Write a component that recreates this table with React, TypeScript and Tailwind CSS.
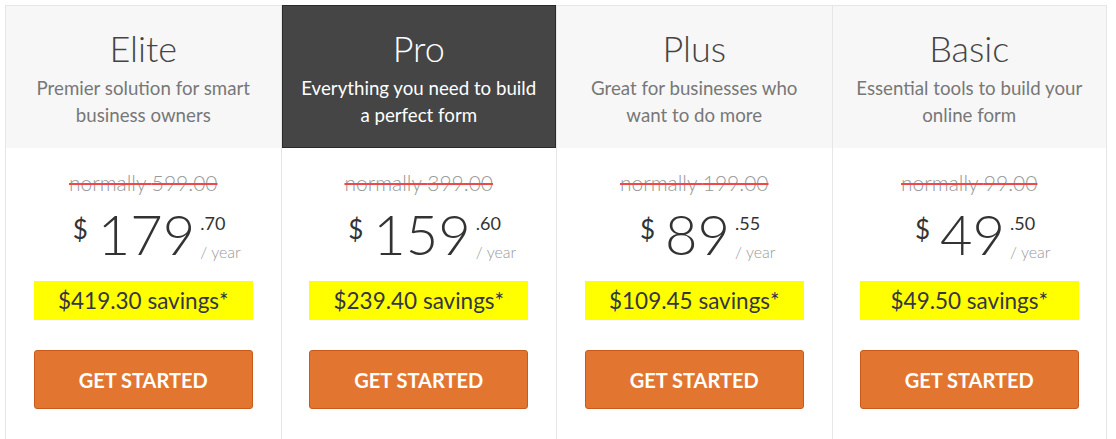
const plans = [
  { name: "Elite", desc: ["Premier solution for smart", "business owners"], was: "599.00", dollars: "179", cents: ".70", savings: "$419.30" },
  { name: "Pro", desc: ["Everything you need to build", "a perfect form"], was: "399.00", dollars: "159", cents: ".60", savings: "$239.40", featured: true },
  { name: "Plus", desc: ["Great for businesses who", "want to do more"], was: "199.00", dollars: "89", cents: ".55", savings: "$109.45" },
  { name: "Basic", desc: ["Essential tools to build your", "online form"], was: "99.00", dollars: "49", cents: ".50", savings: "$49.50" },
];

type Plan = (typeof plans)[number];

const PlanCard = ({ plan, last }: { plan: Plan; last: boolean }) => (
  <div className={`flex flex-col border-l border-t border-[#e6e6e6] bg-white ${last ? "border-r" : ""}`}>
    {plan.featured ? (
      <div className="-mt-px h-[143px] border border-[#2a2a2a] bg-[#454545] pt-[21px] text-center text-white">
        <h2 className="text-[36px] leading-[43px] font-light">{plan.name}</h2>
        <p className="mt-[5px] text-[18.7px] leading-[27px]">
          {plan.desc[0]}
          <br />
          {plan.desc[1]}
        </p>
      </div>
    ) : (
      <div className="h-[142px] bg-[#f7f7f7] pt-[21px] text-center">
        <h2 className="text-[36px] leading-[43px] font-light text-[#444]">{plan.name}</h2>
        <p className="mt-[5px] text-[18.7px] leading-[27px] text-[#777]">
          {plan.desc[0]}
          <br />
          {plan.desc[1]}
        </p>
      </div>
    )}

    <div className="flex flex-col items-center pt-[21px] pb-10">
      <p className="text-[21px] leading-[27px] font-light text-[#999] line-through decoration-[#f0484a] decoration-[1.5px]">
        normally {plan.was}
      </p>

      {/* price */}
      <div className="mt-[10px] flex items-start pl-[27px] text-[#333]">
        <span className="mt-[10px] text-[26px] leading-[26px]">$</span>
        <span className="ml-[10px] text-[56px] leading-[56px] font-light">{plan.dollars}</span>
        <div className="ml-[5px] flex flex-col">
          <span className="mt-[8px] text-[18px] leading-[18px]">{plan.cents}</span>
          <span className="mt-[12px] text-[16px] leading-[16px] font-light text-[#999]">/ year</span>
        </div>
      </div>

      <div className="mt-[19px] flex h-[39px] w-[219px] items-center justify-center bg-[#ffff00] text-[22.5px] text-[#353548]">
        {plan.savings} savings*
      </div>

      <button className="mt-[30px] h-[59px] w-[219px] rounded-[3px] border border-[#c85a1c] bg-[#e27631] text-[20px] font-bold text-white">
        GET STARTED
      </button>
    </div>
  </div>
);

export default function App() {
  return (
    <div className="min-h-[439px] bg-white pl-[5px] pt-[5px] font-['Lato','Liberation_Sans',sans-serif]">
      <div className="grid w-[1102px] grid-cols-4">
        {plans.map((plan, i) => (
          <PlanCard key={plan.name} plan={plan} last={i === plans.length - 1} />
        ))}
      </div>
    </div>
  );
}
